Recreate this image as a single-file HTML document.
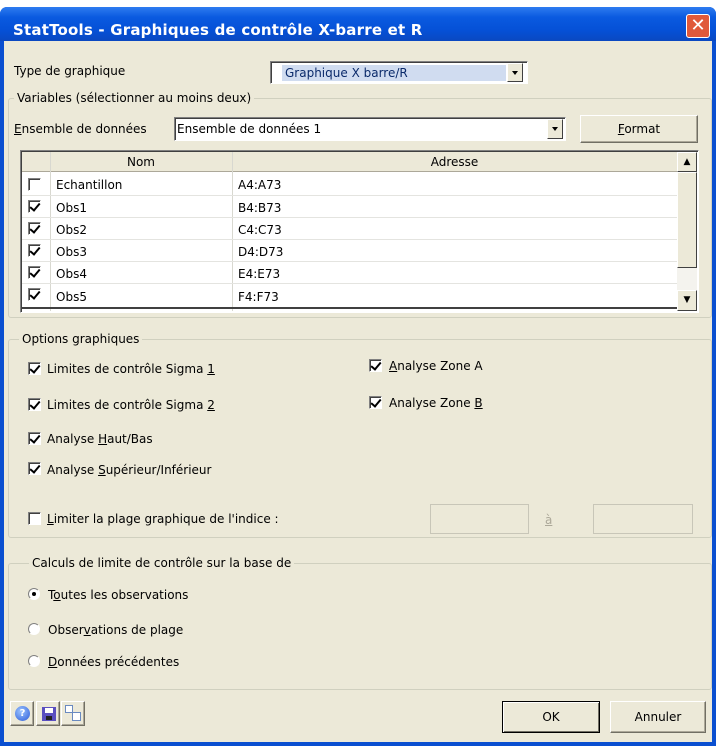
<!DOCTYPE html>
<html><head><meta charset="utf-8"><style>
*{box-sizing:border-box;margin:0;padding:0}
body{width:723px;height:746px;background:#fff;position:relative;overflow:hidden;font-family:Tahoma,"DejaVu Sans","Liberation Sans",sans-serif;font-size:12px;color:#000}
.a{position:absolute}
.t{position:absolute;white-space:nowrap;line-height:14px}
.grp{position:absolute;border:1px solid #d0d0bf;border-radius:3px}
.leg{position:absolute;background:#ece9d8;padding:0 3px;line-height:14px}
.cbw{position:absolute;width:13px;height:13px;border-top:1px solid #808080;border-left:1px solid #808080;border-right:1px solid #fff;border-bottom:1px solid #fff;background:#fff;box-shadow:inset 1px 1px 0 #404040}
.cbw.k::after{content:"";position:absolute;left:3px;top:0px;width:4px;height:8px;border:solid #000;border-width:0 2px 2px 0;transform:rotate(40deg)}
.rd{position:absolute;width:12px;height:12px;border-radius:50%;background:#fff;border:1px solid;border-color:#808080 #fff #fff #808080}
.rd.k::after{content:"";position:absolute;left:3px;top:3px;width:4px;height:4px;border-radius:50%;background:#000}
.btn{position:absolute;background:#ece9d8;border:1px solid;border-color:#fff #716f64 #716f64 #fff;box-shadow:inset -1px -1px 0 #aca899;text-align:center}
.sunk{position:absolute;background:#fff;border:1px solid;border-color:#808080 #fff #fff #808080;box-shadow:inset 1px 1px 0 #404040}
.arr{position:absolute;width:16px;background:#ece9d8;border:1px solid;border-color:#fff #404040 #404040 #fff}
.arr::after{content:"";position:absolute;left:4px;top:50%;margin-top:-2px;border-left:3px solid transparent;border-right:3px solid transparent;border-top:4px solid #000}
u{text-decoration:underline}
</style></head><body>
<div class="a" style="left:0;top:7px;width:716px;height:739px;background:#0a4fd0;border-radius:7px 7px 0 0"></div>
<div class="a" style="left:0;top:7px;width:716px;height:34px;background:linear-gradient(#2e7cf0,#0a5ae0 30%,#0550d6 70%,#0a48c0);border-radius:7px 7px 0 0"></div>
<div class="t" style="left:13px;top:21px;color:#fff;font-weight:bold;font-size:15px;line-height:18px;letter-spacing:0.2px">StatTools - Graphiques de contrôle X-barre et R</div>
<div class="a" style="left:686px;top:14px;width:24px;height:24px;background:#e0593a;border:1px solid #fff;border-radius:3px;color:#fff;font-weight:bold;font-size:18px;text-align:center;line-height:21px">✕</div>
<div class="a" style="left:4px;top:41px;width:708px;height:701px;background:#ece9d8"></div>

<div class="t" style="left:14px;top:64px">Type de graphique</div>
<div class="sunk" style="left:270px;top:61px;width:258px;height:23px"></div>
<div class="a" style="left:282px;top:65px;width:224px;height:16px;background:#d0dcf0"></div>
<div class="t" style="left:285px;top:66px;color:#0a2a6a">Graphique X barre/R</div>
<div class="arr" style="left:507px;top:63px;height:19px"></div>

<div class="grp" style="left:8px;top:98px;width:704px;height:220px"></div>
<div class="leg" style="left:14px;top:91px">Variables (sélectionner au moins deux)</div>
<div class="t" style="left:14px;top:122px"><u>E</u>nsemble de données</div>
<div class="sunk" style="left:174px;top:117px;width:392px;height:24px"></div>
<div class="t" style="left:177px;top:122px">Ensemble de données 1</div>
<div class="arr" style="left:547px;top:119px;height:20px"></div>
<div class="btn" style="left:580px;top:115px;width:118px;height:28px;line-height:26px"><u>F</u>ormat</div>

<div class="sunk" style="left:20px;top:150px;width:679px;height:163px"></div>
<div class="a" style="left:22px;top:152px;width:655px;height:20px;background:#ece9d8;border-bottom:1px solid #aca899"></div>
<div class="a" style="left:50px;top:152px;width:1px;height:159px;background:#d8d8d0"></div>
<div class="a" style="left:232px;top:152px;width:1px;height:159px;background:#d8d8d0"></div>
<div class="t" style="left:50px;top:155px;width:182px;text-align:center">Nom</div>
<div class="t" style="left:232px;top:155px;width:445px;text-align:center">Adresse</div>
<div class="a" style="left:22px;top:195px;width:655px;height:1px;background:#e4e4e0"></div>
<div class="a" style="left:22px;top:217px;width:655px;height:1px;background:#e4e4e0"></div>
<div class="a" style="left:22px;top:239px;width:655px;height:1px;background:#e4e4e0"></div>
<div class="a" style="left:22px;top:261px;width:655px;height:1px;background:#e4e4e0"></div>
<div class="a" style="left:22px;top:283px;width:655px;height:1px;background:#e4e4e0"></div>
<div class="a" style="left:22px;top:307px;width:655px;height:2px;background:#404040"></div>
<div class="cbw" style="left:28px;top:178px"></div>
<div class="t" style="left:56px;top:178px">Echantillon</div><div class="t" style="left:238px;top:178px">A4:A73</div>
<div class="cbw k" style="left:28px;top:200px"></div>
<div class="t" style="left:56px;top:201px">Obs1</div><div class="t" style="left:238px;top:201px">B4:B73</div>
<div class="cbw k" style="left:28px;top:222px"></div>
<div class="t" style="left:56px;top:223px">Obs2</div><div class="t" style="left:238px;top:223px">C4:C73</div>
<div class="cbw k" style="left:28px;top:244px"></div>
<div class="t" style="left:56px;top:245px">Obs3</div><div class="t" style="left:238px;top:245px">D4:D73</div>
<div class="cbw k" style="left:28px;top:266px"></div>
<div class="t" style="left:56px;top:267px">Obs4</div><div class="t" style="left:238px;top:267px">E4:E73</div>
<div class="cbw k" style="left:28px;top:288px"></div>
<div class="t" style="left:56px;top:290px">Obs5</div><div class="t" style="left:238px;top:290px">F4:F73</div>
<div class="a" style="left:677px;top:152px;width:20px;height:159px;background:#f4f3ee"></div>
<div class="a" style="left:677px;top:152px;width:20px;height:20px;background:#ece9d8;border:1px solid;border-color:#fff #404040 #404040 #fff;font-size:9px;text-align:center;line-height:18px">▲</div>
<div class="a" style="left:677px;top:172px;width:20px;height:96px;background:#ece9d8;border:1px solid;border-color:#fff #404040 #404040 #fff"></div>
<div class="a" style="left:677px;top:290px;width:20px;height:21px;background:#ece9d8;border:1px solid;border-color:#fff #404040 #404040 #fff;font-size:9px;text-align:center;line-height:19px">▼</div>

<div class="grp" style="left:8px;top:339px;width:704px;height:199px"></div>
<div class="leg" style="left:19px;top:332px">Options graphiques</div>
<div class="cbw k" style="left:28px;top:362px"></div><div class="t" style="left:47px;top:362px">Limites de contrôle Sigma <u>1</u></div>
<div class="cbw k" style="left:28px;top:398px"></div><div class="t" style="left:47px;top:398px">Limites de contrôle Sigma <u>2</u></div>
<div class="cbw k" style="left:28px;top:432px"></div><div class="t" style="left:47px;top:432px">Analyse <u>H</u>aut/Bas</div>
<div class="cbw k" style="left:28px;top:462px"></div><div class="t" style="left:47px;top:463px">Analyse <u>S</u>upérieur/Inférieur</div>
<div class="cbw k" style="left:369px;top:359px"></div><div class="t" style="left:389px;top:359px"><u>A</u>nalyse Zone A</div>
<div class="cbw k" style="left:369px;top:396px"></div><div class="t" style="left:389px;top:396px">Analyse Zone <u>B</u></div>
<div class="cbw" style="left:28px;top:512px"></div><div class="t" style="left:47px;top:512px"><u>L</u>imiter la plage graphique de l'indice :</div>
<div class="a" style="left:430px;top:504px;width:99px;height:30px;border:1px solid #c8c6b8;background:#ece9d8"></div>
<div class="t" style="left:545px;top:513px;color:#aca899"><u>à</u></div>
<div class="a" style="left:593px;top:504px;width:100px;height:30px;border:1px solid #c8c6b8;background:#ece9d8"></div>

<div class="grp" style="left:8px;top:563px;width:704px;height:127px"></div>
<div class="leg" style="left:29px;top:556px">Calculs de limite de contrôle sur la base de</div>
<div class="rd k" style="left:28px;top:588px"></div><div class="t" style="left:48px;top:588px">T<u>o</u>utes les observations</div>
<div class="rd" style="left:28px;top:623px"></div><div class="t" style="left:48px;top:623px">Obser<u>v</u>ations de plage</div>
<div class="rd" style="left:28px;top:655px"></div><div class="t" style="left:48px;top:655px"><u>D</u>onnées précédentes</div>

<div class="btn" style="left:10px;top:701px;width:24px;height:25px"><div class="a" style="left:4px;top:4px;width:15px;height:15px;border-radius:50%;background:radial-gradient(circle at 40% 35%,#9cc4ff,#2a5ad8);color:#fff;font-size:10px;font-weight:bold;line-height:15px">?</div></div>
<div class="btn" style="left:36px;top:701px;width:24px;height:25px"><div class="a" style="left:5px;top:5px;width:14px;height:14px;background:#5a4fc0"><div class="a" style="left:3px;top:1px;width:8px;height:5px;background:#fff"></div><div class="a" style="left:4px;top:9px;width:6px;height:4px;background:#222"></div></div></div>
<div class="btn" style="left:61px;top:701px;width:24px;height:25px"><div class="a" style="left:3px;top:3px;width:8px;height:8px;border:1px solid #6a8ac0;background:#fff"></div><div class="a" style="left:10px;top:10px;width:9px;height:9px;border:1px solid #6a8ac0;background:#fff"></div></div>
<div class="btn" style="left:502px;top:701px;width:98px;height:32px;line-height:30px;border:1px solid #000;box-shadow:inset 1px 1px 0 #fff,inset -1px -1px 0 #716f64">OK</div>
<div class="btn" style="left:610px;top:701px;width:96px;height:32px;line-height:30px">Annuler</div>
</body></html>
